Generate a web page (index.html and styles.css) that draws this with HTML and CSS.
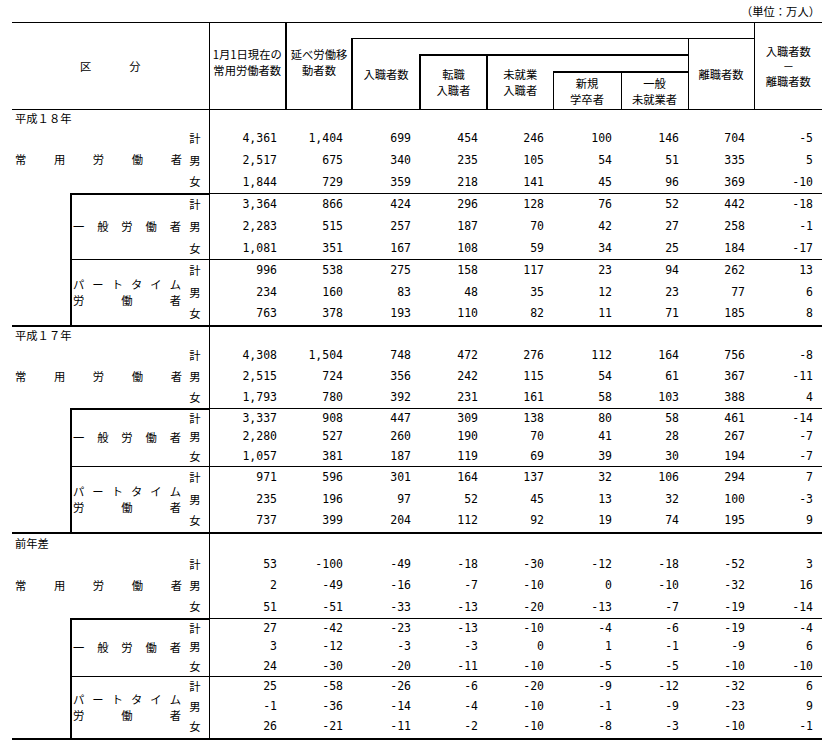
FILE: index.html
```html
<!DOCTYPE html>
<html lang="ja">
<head>
<meta charset="utf-8">
<title>常用労働者の移動状況</title>
<link rel="stylesheet" href="styles.css">
</head>
<body>
<div class="sheet">
  <div class="unit">（単位：万人）</div>
  <table class="stats">
    <colgroup>
      <col class="c-a"><col class="c-b"><col class="c-k">
      <col class="c-1"><col class="c-2"><col class="c-3"><col class="c-4"><col class="c-5"><col class="c-6"><col class="c-7"><col class="c-8"><col class="c-9">
    </colgroup>
    <thead>
      <tr class="h1">
        <th colspan="3" rowspan="4" class="hk"><div class="kubun"><span>区</span><span>分</span></div></th>
        <th rowspan="4" class="hc1">1月1日現在の<br>常用労働者数</th>
        <th rowspan="4" class="hc2">延べ労働移<br>動者数</th>
        <th colspan="6" class="hs1"></th>
        <th rowspan="4" class="hc9">入職者数<br>－<br>離職者数</th>
      </tr>
      <tr class="h2">
        <th rowspan="3" class="hc3">入職者数</th>
        <th colspan="4" class="hs2"></th>
        <th rowspan="3" class="hc8">離職者数</th>
      </tr>
      <tr class="h3">
        <th rowspan="2" class="hc4">転職<br>入職者</th>
        <th rowspan="2" class="hc5">未就業<br>入職者</th>
        <th colspan="2" class="hs3"></th>
      </tr>
      <tr class="h4">
        <th class="hc6">新規<br>学卒者</th>
        <th class="hc7">一般<br>未就業者</th>
      </tr>
    </thead>

    <tbody class="sec sec1">
      <tr class="lr"><td colspan="3" class="sl">平成１８年</td><td class="f"></td><td colspan="8"></td></tr>
      <tr class="b1 x1">
        <td colspan="2" rowspan="3" class="lab-main"><div class="dist"><span>常</span><span>用</span><span>労</span><span>働</span><span>者</span></div></td>
        <td class="k">計</td><td class="n f">4,361</td><td class="n">1,404</td><td class="n">699</td><td class="n">454</td><td class="n">246</td><td class="n">100</td><td class="n">146</td><td class="n">704</td><td class="n">-5</td>
      </tr>
      <tr class="r1 x2"><td class="k">男</td><td class="n f">2,517</td><td class="n">675</td><td class="n">340</td><td class="n">235</td><td class="n">105</td><td class="n">54</td><td class="n">51</td><td class="n">335</td><td class="n">5</td></tr>
      <tr class="r1 x3"><td class="k">女</td><td class="n f">1,844</td><td class="n">729</td><td class="n">359</td><td class="n">218</td><td class="n">141</td><td class="n">45</td><td class="n">96</td><td class="n">369</td><td class="n">-10</td></tr>
      <tr class="b2 x1">
        <td rowspan="6" class="blank"></td>
        <td rowspan="3" class="lab-sub"><div class="dist"><span>一</span><span>般</span><span>労</span><span>働</span><span>者</span></div></td>
        <td class="k">計</td><td class="n f">3,364</td><td class="n">866</td><td class="n">424</td><td class="n">296</td><td class="n">128</td><td class="n">76</td><td class="n">52</td><td class="n">442</td><td class="n">-18</td>
      </tr>
      <tr class="r2 x2"><td class="k">男</td><td class="n f">2,283</td><td class="n">515</td><td class="n">257</td><td class="n">187</td><td class="n">70</td><td class="n">42</td><td class="n">27</td><td class="n">258</td><td class="n">-1</td></tr>
      <tr class="r2 x3"><td class="k">女</td><td class="n f">1,081</td><td class="n">351</td><td class="n">167</td><td class="n">108</td><td class="n">59</td><td class="n">34</td><td class="n">25</td><td class="n">184</td><td class="n">-17</td></tr>
      <tr class="b3 x1">
        <td rowspan="3" class="lab-sub pt"><div class="dist"><span>パ</span><span>ー</span><span>ト</span><span>タ</span><span>イ</span><span>ム</span></div><div class="dist"><span>労</span><span>働</span><span>者</span></div></td>
        <td class="k">計</td><td class="n f">996</td><td class="n">538</td><td class="n">275</td><td class="n">158</td><td class="n">117</td><td class="n">23</td><td class="n">94</td><td class="n">262</td><td class="n">13</td>
      </tr>
      <tr class="r3 x2"><td class="k">男</td><td class="n f">234</td><td class="n">160</td><td class="n">83</td><td class="n">48</td><td class="n">35</td><td class="n">12</td><td class="n">23</td><td class="n">77</td><td class="n">6</td></tr>
      <tr class="r3 x3"><td class="k">女</td><td class="n f">763</td><td class="n">378</td><td class="n">193</td><td class="n">110</td><td class="n">82</td><td class="n">11</td><td class="n">71</td><td class="n">185</td><td class="n">8</td></tr>
    </tbody>

    <tbody class="sec sec2">
      <tr class="lr"><td colspan="3" class="sl">平成１７年</td><td class="f"></td><td colspan="8"></td></tr>
      <tr class="b1 x1">
        <td colspan="2" rowspan="3" class="lab-main"><div class="dist"><span>常</span><span>用</span><span>労</span><span>働</span><span>者</span></div></td>
        <td class="k">計</td><td class="n f">4,308</td><td class="n">1,504</td><td class="n">748</td><td class="n">472</td><td class="n">276</td><td class="n">112</td><td class="n">164</td><td class="n">756</td><td class="n">-8</td>
      </tr>
      <tr class="r1 x2"><td class="k">男</td><td class="n f">2,515</td><td class="n">724</td><td class="n">356</td><td class="n">242</td><td class="n">115</td><td class="n">54</td><td class="n">61</td><td class="n">367</td><td class="n">-11</td></tr>
      <tr class="r1 x3"><td class="k">女</td><td class="n f">1,793</td><td class="n">780</td><td class="n">392</td><td class="n">231</td><td class="n">161</td><td class="n">58</td><td class="n">103</td><td class="n">388</td><td class="n">4</td></tr>
      <tr class="b2 x1">
        <td rowspan="6" class="blank"></td>
        <td rowspan="3" class="lab-sub"><div class="dist"><span>一</span><span>般</span><span>労</span><span>働</span><span>者</span></div></td>
        <td class="k">計</td><td class="n f">3,337</td><td class="n">908</td><td class="n">447</td><td class="n">309</td><td class="n">138</td><td class="n">80</td><td class="n">58</td><td class="n">461</td><td class="n">-14</td>
      </tr>
      <tr class="r2 x2"><td class="k">男</td><td class="n f">2,280</td><td class="n">527</td><td class="n">260</td><td class="n">190</td><td class="n">70</td><td class="n">41</td><td class="n">28</td><td class="n">267</td><td class="n">-7</td></tr>
      <tr class="r2 x3"><td class="k">女</td><td class="n f">1,057</td><td class="n">381</td><td class="n">187</td><td class="n">119</td><td class="n">69</td><td class="n">39</td><td class="n">30</td><td class="n">194</td><td class="n">-7</td></tr>
      <tr class="b3 x1">
        <td rowspan="3" class="lab-sub pt"><div class="dist"><span>パ</span><span>ー</span><span>ト</span><span>タ</span><span>イ</span><span>ム</span></div><div class="dist"><span>労</span><span>働</span><span>者</span></div></td>
        <td class="k">計</td><td class="n f">971</td><td class="n">596</td><td class="n">301</td><td class="n">164</td><td class="n">137</td><td class="n">32</td><td class="n">106</td><td class="n">294</td><td class="n">7</td>
      </tr>
      <tr class="r3 x2"><td class="k">男</td><td class="n f">235</td><td class="n">196</td><td class="n">97</td><td class="n">52</td><td class="n">45</td><td class="n">13</td><td class="n">32</td><td class="n">100</td><td class="n">-3</td></tr>
      <tr class="r3 x3"><td class="k">女</td><td class="n f">737</td><td class="n">399</td><td class="n">204</td><td class="n">112</td><td class="n">92</td><td class="n">19</td><td class="n">74</td><td class="n">195</td><td class="n">9</td></tr>
    </tbody>

    <tbody class="sec sec3">
      <tr class="lr"><td colspan="3" class="sl">前年差</td><td class="f"></td><td colspan="8"></td></tr>
      <tr class="b1 x1">
        <td colspan="2" rowspan="3" class="lab-main"><div class="dist"><span>常</span><span>用</span><span>労</span><span>働</span><span>者</span></div></td>
        <td class="k">計</td><td class="n f">53</td><td class="n">-100</td><td class="n">-49</td><td class="n">-18</td><td class="n">-30</td><td class="n">-12</td><td class="n">-18</td><td class="n">-52</td><td class="n">3</td>
      </tr>
      <tr class="r1 x2"><td class="k">男</td><td class="n f">2</td><td class="n">-49</td><td class="n">-16</td><td class="n">-7</td><td class="n">-10</td><td class="n">0</td><td class="n">-10</td><td class="n">-32</td><td class="n">16</td></tr>
      <tr class="r1 x3"><td class="k">女</td><td class="n f">51</td><td class="n">-51</td><td class="n">-33</td><td class="n">-13</td><td class="n">-20</td><td class="n">-13</td><td class="n">-7</td><td class="n">-19</td><td class="n">-14</td></tr>
      <tr class="b2 x1">
        <td rowspan="6" class="blank"></td>
        <td rowspan="3" class="lab-sub"><div class="dist"><span>一</span><span>般</span><span>労</span><span>働</span><span>者</span></div></td>
        <td class="k">計</td><td class="n f">27</td><td class="n">-42</td><td class="n">-23</td><td class="n">-13</td><td class="n">-10</td><td class="n">-4</td><td class="n">-6</td><td class="n">-19</td><td class="n">-4</td>
      </tr>
      <tr class="r2 x2"><td class="k">男</td><td class="n f">3</td><td class="n">-12</td><td class="n">-3</td><td class="n">-3</td><td class="n">0</td><td class="n">1</td><td class="n">-1</td><td class="n">-9</td><td class="n">6</td></tr>
      <tr class="r2 x3"><td class="k">女</td><td class="n f">24</td><td class="n">-30</td><td class="n">-20</td><td class="n">-11</td><td class="n">-10</td><td class="n">-5</td><td class="n">-5</td><td class="n">-10</td><td class="n">-10</td></tr>
      <tr class="b3 x1">
        <td rowspan="3" class="lab-sub pt"><div class="dist"><span>パ</span><span>ー</span><span>ト</span><span>タ</span><span>イ</span><span>ム</span></div><div class="dist"><span>労</span><span>働</span><span>者</span></div></td>
        <td class="k">計</td><td class="n f">25</td><td class="n">-58</td><td class="n">-26</td><td class="n">-6</td><td class="n">-20</td><td class="n">-9</td><td class="n">-12</td><td class="n">-32</td><td class="n">6</td>
      </tr>
      <tr class="r3 x2"><td class="k">男</td><td class="n f">-1</td><td class="n">-36</td><td class="n">-14</td><td class="n">-4</td><td class="n">-10</td><td class="n">-1</td><td class="n">-9</td><td class="n">-23</td><td class="n">9</td></tr>
      <tr class="r3 x3"><td class="k">女</td><td class="n f">26</td><td class="n">-21</td><td class="n">-11</td><td class="n">-2</td><td class="n">-10</td><td class="n">-8</td><td class="n">-3</td><td class="n">-10</td><td class="n">-1</td></tr>
    </tbody>
  </table>
</div>
</body>
</html>
```

FILE: styles.css
```css
html, body {
  margin: 0;
  padding: 0;
  background: #fff;
}

body {
  font-family: "Noto Sans CJK JP", sans-serif;
  font-size: 11.3px;
  color: #000;
}

.sheet {
  padding-left: 12px;
}

.unit {
  width: 810px;
  height: 22px;
  line-height: 22px;
  text-align: right;
  padding-right: 2px;
  box-sizing: border-box;
}

.stats {
  border-collapse: collapse;
  table-layout: fixed;
  width: 810px;
}

.stats th,
.stats td {
  padding: 0;
  font-weight: normal;
  vertical-align: middle;
  line-height: 1;
}

/* column widths */
.c-a { width: 59px; }
.c-b { width: 115px; }
.c-k { width: 23px; }
.c-1 { width: 77px; }
.c-2 { width: 66px; }
.c-3 { width: 68px; }
.c-4 { width: 67px; }
.c-5 { width: 66px; }
.c-6 { width: 68px; }
.c-7 { width: 67px; }
.c-8 { width: 66px; }
.c-9 { width: 68px; }

/* header */
.h1 { height: 16px; }
.h2 { height: 16px; }
.h3 { height: 17px; }
.h4 { height: 38px; }

.stats thead th {
  text-align: center;
  line-height: 16px;
  white-space: nowrap;
}

.hk  { border-top: 1px solid #000; border-bottom: 1px solid #000; }
.hc1 { border-top: 1px solid #000; border-bottom: 1px solid #000; border-left: 1px solid #000; border-right: 2px solid #000; }
.hc2 { border-top: 1px solid #000; border-bottom: 1px solid #000; }
.stats thead .hc1,
.stats thead .hc2 { padding-bottom: 8px; }
.hs1 { border-top: 1px solid #000; border-bottom: 1px solid #000; }
.hc9 { border-top: 1px solid #000; border-bottom: 1px solid #000; border-left: 1px solid #000; }
.stats thead .hc9 { line-height: 15px; }
.hc3 { border-left: 2px solid #000; border-bottom: 1px solid #000; }
.hs2 { border-bottom: 2px solid #000; }
.hc8 { border-left: 1px solid #000; border-bottom: 1px solid #000; }
.hc4 { border-left: 2px solid #000; border-right: 2px solid #000; border-bottom: 1px solid #000; }
.hc5 { border-bottom: 1px solid #000; }
.hs3 { border-bottom: 2px solid #000; }
.hc6 { border-left: 1px solid #000; border-right: 1px solid #000; border-bottom: 1px solid #000; }
.hc7 { border-bottom: 1px solid #000; }

.kubun {
  display: flex;
  justify-content: center;
  gap: 38px;
}

/* body row heights (per section / block / row) */
.sec1 .lr { height: 18px; }
.sec1 tr.x1, .sec1 tr.x2, .sec1 tr.x3 { height: 22px; }

.sec2 .lr { height: 20px; }
.sec2 .b1, .sec2 .r1 { height: 21px; }
.sec2 .b2, .sec2 .r2.x2 { height: 19px; }
.sec2 .r2.x3 { height: 20px; }
.sec2 .b3, .sec2 .r3.x2, .sec2 .r3.x3 { height: 22px; }

.sec3 .lr { height: 22px; }
.sec3 .b1, .sec3 .r1.x2 { height: 21px; }
.sec3 .r1.x3 { height: 22px; }
.sec3 .b2, .sec3 .r2.x2 { height: 19px; }
.sec3 .r2.x3 { height: 20px; }
.sec3 .b3, .sec3 .r3.x2 { height: 20px; }
.sec3 .r3.x3 { height: 22px; }

.stats tbody {
  border-bottom: 2px solid #000;
}

.sl {
  text-align: left;
  padding-left: 3px !important;
}

.f { border-left: 1px solid #000; }

.k {
  text-align: right;
  padding-right: 8px !important;
}

.n {
  text-align: right;
  padding-right: 9px !important;
  font-family: "DejaVu Sans Mono", monospace;
  font-size: 11.5px;
}

.dist {
  display: flex;
  justify-content: space-between;
}

.lab-main {
  padding: 0 4px 0 3px !important;
}

.lab-sub {
  border-left: 2px solid #000;
  padding: 0 5px 0 1px !important;
}

.pt .dist {
  line-height: 16px;
}

.b2 td { border-top: 1px solid #000; }
.b2 .lab-sub,
.b2 .k { border-top-width: 2px; }
.b2 .blank { border-top: none; }

.b3 td { border-top: 1px solid #000; }
```
